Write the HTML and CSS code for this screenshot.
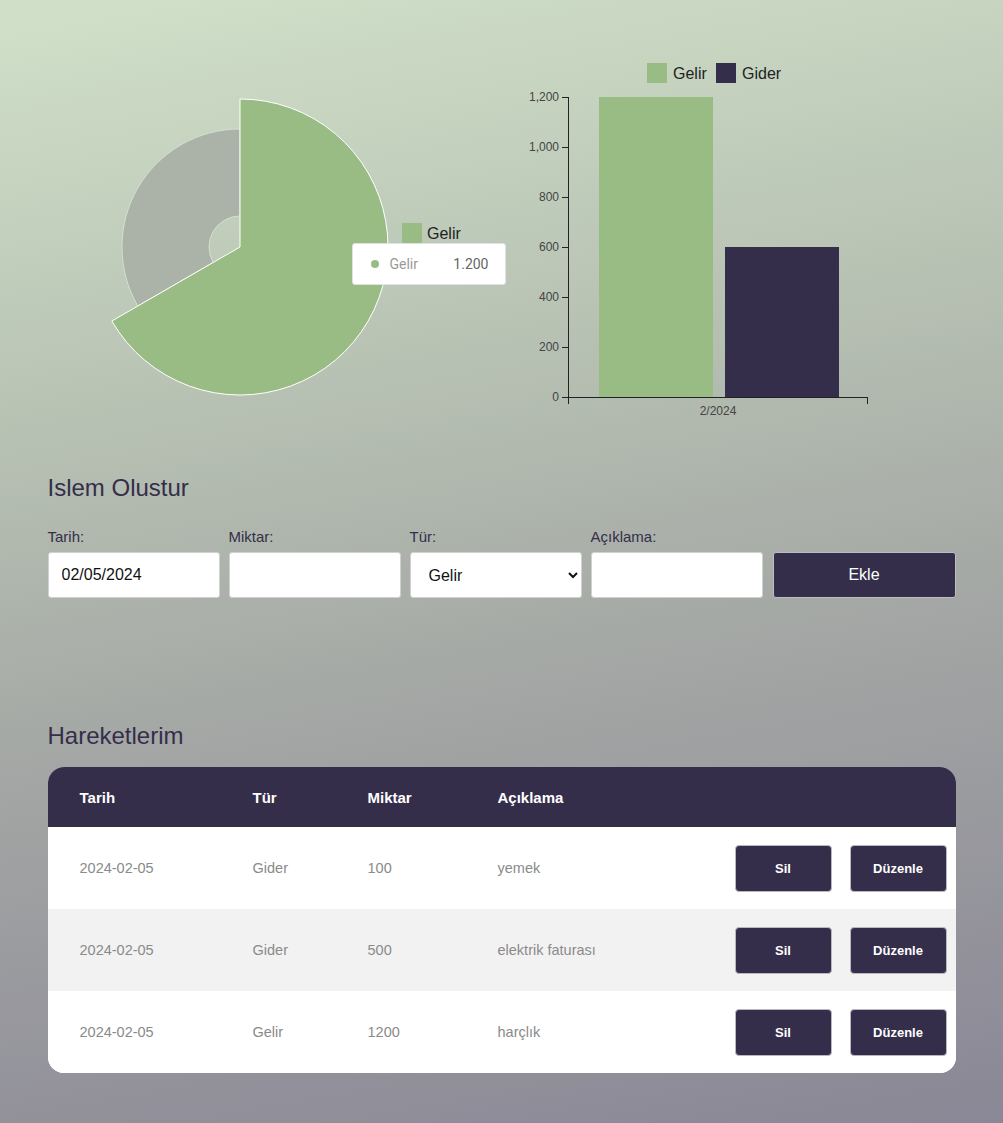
FILE: index.html
```html
<!DOCTYPE html>
<html lang="tr">
<head>
<meta charset="utf-8">
<title>Harcama Takibi</title>
<link rel="stylesheet" href="styles.css">
</head>
<body>
<main class="page">
  <section class="charts">
    <div class="pie-wrap">
      <svg class="pie" width="470" height="400" viewBox="0 0 470 400">
        <path d="M89.81,276 A118,118 0 0 1 192,99 L192,186 A31,31 0 0 0 165.15,232.5 Z" fill="#abb3a8" stroke="#d6ddd2" stroke-width="1"/>
        <path d="M192,217 L192,69 A148,148 0 1 1 63.83,291 Z" fill="#99bc85" stroke="#ffffff" stroke-width="1"/>
        <rect x="354" y="193" width="20" height="20" fill="#99bc85"/>
        <text x="379" y="209" class="legend-text">Gelir</text>
      </svg>
      <div class="tooltip">
        <span class="tip-dot"></span>
        <span class="tip-name">Gelir</span>
        <span class="tip-val">1.200</span>
      </div>
    </div>
    <svg class="bar" width="390" height="400" viewBox="0 0 390 400">
      <rect x="129" y="33" width="20" height="20" fill="#99bc85"/>
      <text x="155" y="49" class="legend-text">Gelir</text>
      <rect x="198" y="33" width="20" height="20" fill="#352e4a"/>
      <text x="224" y="49" class="legend-text">Gider</text>
      <rect x="81" y="67" width="114" height="300" fill="#99bc85"/>
      <rect x="207" y="217" width="114" height="150" fill="#352e4a"/>
      <g stroke="#222" stroke-width="1" fill="none">
        <line x1="50.5" y1="67" x2="50.5" y2="367"/>
        <line x1="50" y1="367.5" x2="350" y2="367.5"/>
        <line x1="44" y1="67.5" x2="50" y2="67.5"/>
        <line x1="44" y1="117.5" x2="50" y2="117.5"/>
        <line x1="44" y1="167.5" x2="50" y2="167.5"/>
        <line x1="44" y1="217.5" x2="50" y2="217.5"/>
        <line x1="44" y1="267.5" x2="50" y2="267.5"/>
        <line x1="44" y1="317.5" x2="50" y2="317.5"/>
        <line x1="44" y1="367.5" x2="50" y2="367.5"/>
        <line x1="50.5" y1="367" x2="50.5" y2="374"/>
        <line x1="349.5" y1="367" x2="349.5" y2="374"/>
      </g>
      <g class="tick-text">
        <text x="41" y="71">1,200</text>
        <text x="41" y="121">1,000</text>
        <text x="41" y="171">800</text>
        <text x="41" y="221">600</text>
        <text x="41" y="271">400</text>
        <text x="41" y="321">200</text>
        <text x="41" y="371">0</text>
      </g>
      <text x="200" y="385" class="x-label">2/2024</text>
    </svg>
  </section>

  <section class="create">
    <h2 class="title">Islem Olustur</h2>
    <form class="form-row">
      <label class="field">
        <span class="field-label">Tarih:</span>
        <input class="control" type="text" value="02/05/2024">
      </label>
      <label class="field">
        <span class="field-label">Miktar:</span>
        <input class="control" type="text" value="">
      </label>
      <label class="field">
        <span class="field-label">Tür:</span>
        <select class="control select">
          <option>Gelir</option>
          <option>Gider</option>
        </select>
      </label>
      <label class="field">
        <span class="field-label">Açıklama:</span>
        <input class="control" type="text" value="">
      </label>
      <button class="add-btn" type="button">Ekle</button>
    </form>
  </section>

  <section class="history">
    <h2 class="title">Hareketlerim</h2>
    <div class="table">
      <div class="row head">
        <span>Tarih</span><span>Tür</span><span>Miktar</span><span>Açıklama</span><span></span>
      </div>
      <div class="row">
        <span>2024-02-05</span><span>Gider</span><span>100</span><span>yemek</span>
        <span class="actions"><button class="row-btn" type="button">Sil</button><button class="row-btn" type="button">Düzenle</button></span>
      </div>
      <div class="row alt">
        <span>2024-02-05</span><span>Gider</span><span>500</span><span>elektrik faturası</span>
        <span class="actions"><button class="row-btn" type="button">Sil</button><button class="row-btn" type="button">Düzenle</button></span>
      </div>
      <div class="row">
        <span>2024-02-05</span><span>Gelir</span><span>1200</span><span>harçlık</span>
        <span class="actions"><button class="row-btn" type="button">Sil</button><button class="row-btn" type="button">Düzenle</button></span>
      </div>
    </div>
  </section>
</main>
</body>
</html>
```

FILE: styles.css
```css
html, body {
  margin: 0;
  padding: 0;
}
body {
  min-height: 1123px;
  background: linear-gradient(170deg, #d1e1c9 0%, #b6c0b2 35%, #a3a6a4 60%, #8a8796 100%);
  font-family: "Liberation Sans", Arial, sans-serif;
  color: #352e4a;
}
.page {
  width: 908px;
  margin: 0 auto;
  padding-top: 30px;
}
.charts {
  display: flex;
  height: 400px;
}
.pie-wrap {
  position: relative;
  width: 470px;
  height: 400px;
}
.pie, .bar {
  display: block;
}
.legend-text {
  font-family: "Liberation Sans", Arial, sans-serif;
  font-size: 16px;
  fill: #222;
}
.tick-text text {
  font-family: "Liberation Sans", Arial, sans-serif;
  font-size: 12px;
  fill: #444;
  text-anchor: end;
}
.x-label {
  font-family: "Liberation Sans", Arial, sans-serif;
  font-size: 12px;
  fill: #444;
  text-anchor: middle;
}
.tooltip {
  position: absolute;
  left: 304px;
  top: 213px;
  width: 154px;
  height: 42px;
  background: #fff;
  border: 1px solid #e2e2e2;
  border-radius: 3px;
  display: flex;
  align-items: center;
  padding: 0 16px 0 18px;
  box-sizing: border-box;
  font-family: Roboto, "Liberation Sans", sans-serif;
  font-size: 14px;
}
.tip-dot {
  width: 8px;
  height: 8px;
  border-radius: 50%;
  background: #99bc85;
  margin-right: 11px;
}
.tip-name {
  color: #9a9a9a;
}
.tip-val {
  margin-left: auto;
  color: #666;
}
.title {
  margin: 0;
  font-size: 24px;
  line-height: 28px;
  font-weight: normal;
  color: #352e4a;
}
.create {
  margin-top: 44px;
}
.form-row {
  display: flex;
  align-items: flex-end;
  gap: 9px;
  margin-top: 26px;
}
.field {
  display: flex;
  flex-direction: column;
  width: 172px;
}
.field-label {
  font-size: 15px;
  line-height: 18px;
  margin-bottom: 6px;
  color: #352e4a;
}
.control {
  box-sizing: border-box;
  width: 172px;
  height: 46px;
  border: 1px solid #d0d0d0;
  border-radius: 3px;
  background: #fff;
  font-family: "Liberation Sans", Arial, sans-serif;
  font-size: 16px;
  color: #111;
  padding: 0 13px;
  margin: 0;
}
.select {
  padding: 0 8px 0 14px;
}
.add-btn {
  flex: 1;
  height: 46px;
  border: 1px solid #bdbbc5;
  border-radius: 3px;
  background: #352e4a;
  color: #fff;
  font-family: "Liberation Sans", Arial, sans-serif;
  font-size: 16px;
  margin-left: 1px;
}
.history {
  margin-top: 124px;
}
.table {
  margin-top: 17px;
  border-radius: 16px;
  overflow: hidden;
  background: #fff;
}
.row {
  display: grid;
  grid-template-columns: 173px 115px 130px 1fr auto;
  align-items: center;
  height: 82px;
  padding-left: 32px;
  padding-right: 9px;
  font-size: 14.5px;
  color: #8a8a8a;
  background: #fff;
}
.row.alt {
  background: #f2f2f2;
}
.row.head {
  height: 60px;
  background: #352e4a;
  color: #fff;
  font-weight: bold;
  font-size: 15px;
}
.actions {
  display: flex;
  gap: 18px;
}
.row-btn {
  width: 97px;
  height: 47px;
  border: 1px solid #b9b7bf;
  border-radius: 4px;
  background: #352e4a;
  color: #fff;
  font-family: "Liberation Sans", Arial, sans-serif;
  font-size: 13px;
  font-weight: bold;
  padding: 0;
}
```
